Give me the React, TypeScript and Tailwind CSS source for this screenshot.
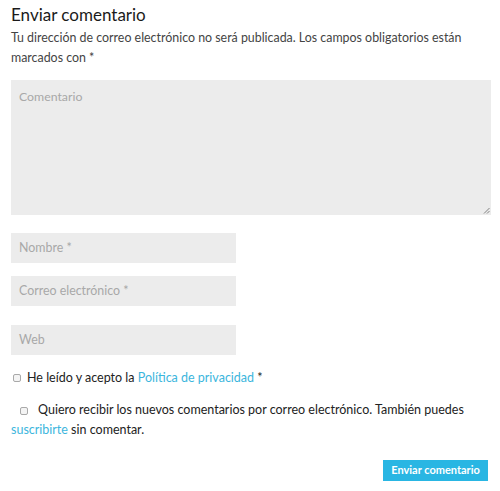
import React from 'react';

const Box = ({ className }: { className: string }) => (
  <span className={`inline-block w-[8px] h-[8px] rounded-[2px] border border-[#a9a9a9] bg-[#f4f4f4] ${className}`} />
);

const App = () => {
  return (
    <div className="w-[500px] h-[491px] bg-white font-['Lato',sans-serif] text-[#333] px-[11px] pt-[4px]">
      <h3 className="text-[17px] leading-[22px] text-[#1a1a1a]">Enviar comentario</h3>
      <p className="mt-[2px] text-[12.4px] leading-[20px] text-[#444]">
        Tu dirección de correo electrónico no será publicada. Los campos obligatorios están marcados con *
      </p>
      <form className="mt-[12px]">
        <div className="w-[480px] h-[135px] bg-[#ececec] relative px-[8px] pt-[3px]">
          <span className="text-[12.3px] text-[#a8a8a8]">Comentario</span>
          <svg className="absolute right-[1px] bottom-[1px]" width="7" height="7" viewBox="0 0 7 7">
            <path d="M6.5 1 L1 6.5 M6.5 4 L4 6.5" stroke="#777" strokeWidth="0.9" />
          </svg>
        </div>
        <div className="mt-[18px] w-[225px] h-[30px] bg-[#ececec] flex items-center px-[8px] text-[12.4px] text-[#a8a8a8]">Nombre *</div>
        <div className="mt-[13px] w-[225px] h-[30px] bg-[#ececec] flex items-center px-[8px] text-[12.4px] text-[#a8a8a8]">Correo electrónico *</div>
        <div className="mt-[19px] w-[225px] h-[30px] bg-[#ececec] flex items-center px-[8px] text-[12.4px] text-[#a8a8a8]">Web</div>
        <div className="mt-[13px] flex items-center text-[12.5px] leading-[20px] text-[#222]">
          <Box className="ml-[2px] mr-[6px]" />
          <span>He leído y acepto la <span className="text-[#3cb6dd]">Política de privacidad</span> *</span>
        </div>
        <p className="mt-[12px] text-[12.5px] leading-[20px] text-[#222]">
          <Box className="ml-[9px] mr-[10px] align-[-1px]" />
          Quiero recibir los nuevos comentarios por correo electrónico. También puedes <span className="text-[#3cb6dd]">suscribirte</span> sin comentar.
        </p>
        <div className="mt-[20px] flex justify-end pr-[1px]">
          <div className="w-[105px] h-[21px] bg-[#29b6e3] text-white text-[11px] font-bold flex items-center justify-center">Enviar comentario</div>
        </div>
      </form>
    </div>
  );
};

export default App;
